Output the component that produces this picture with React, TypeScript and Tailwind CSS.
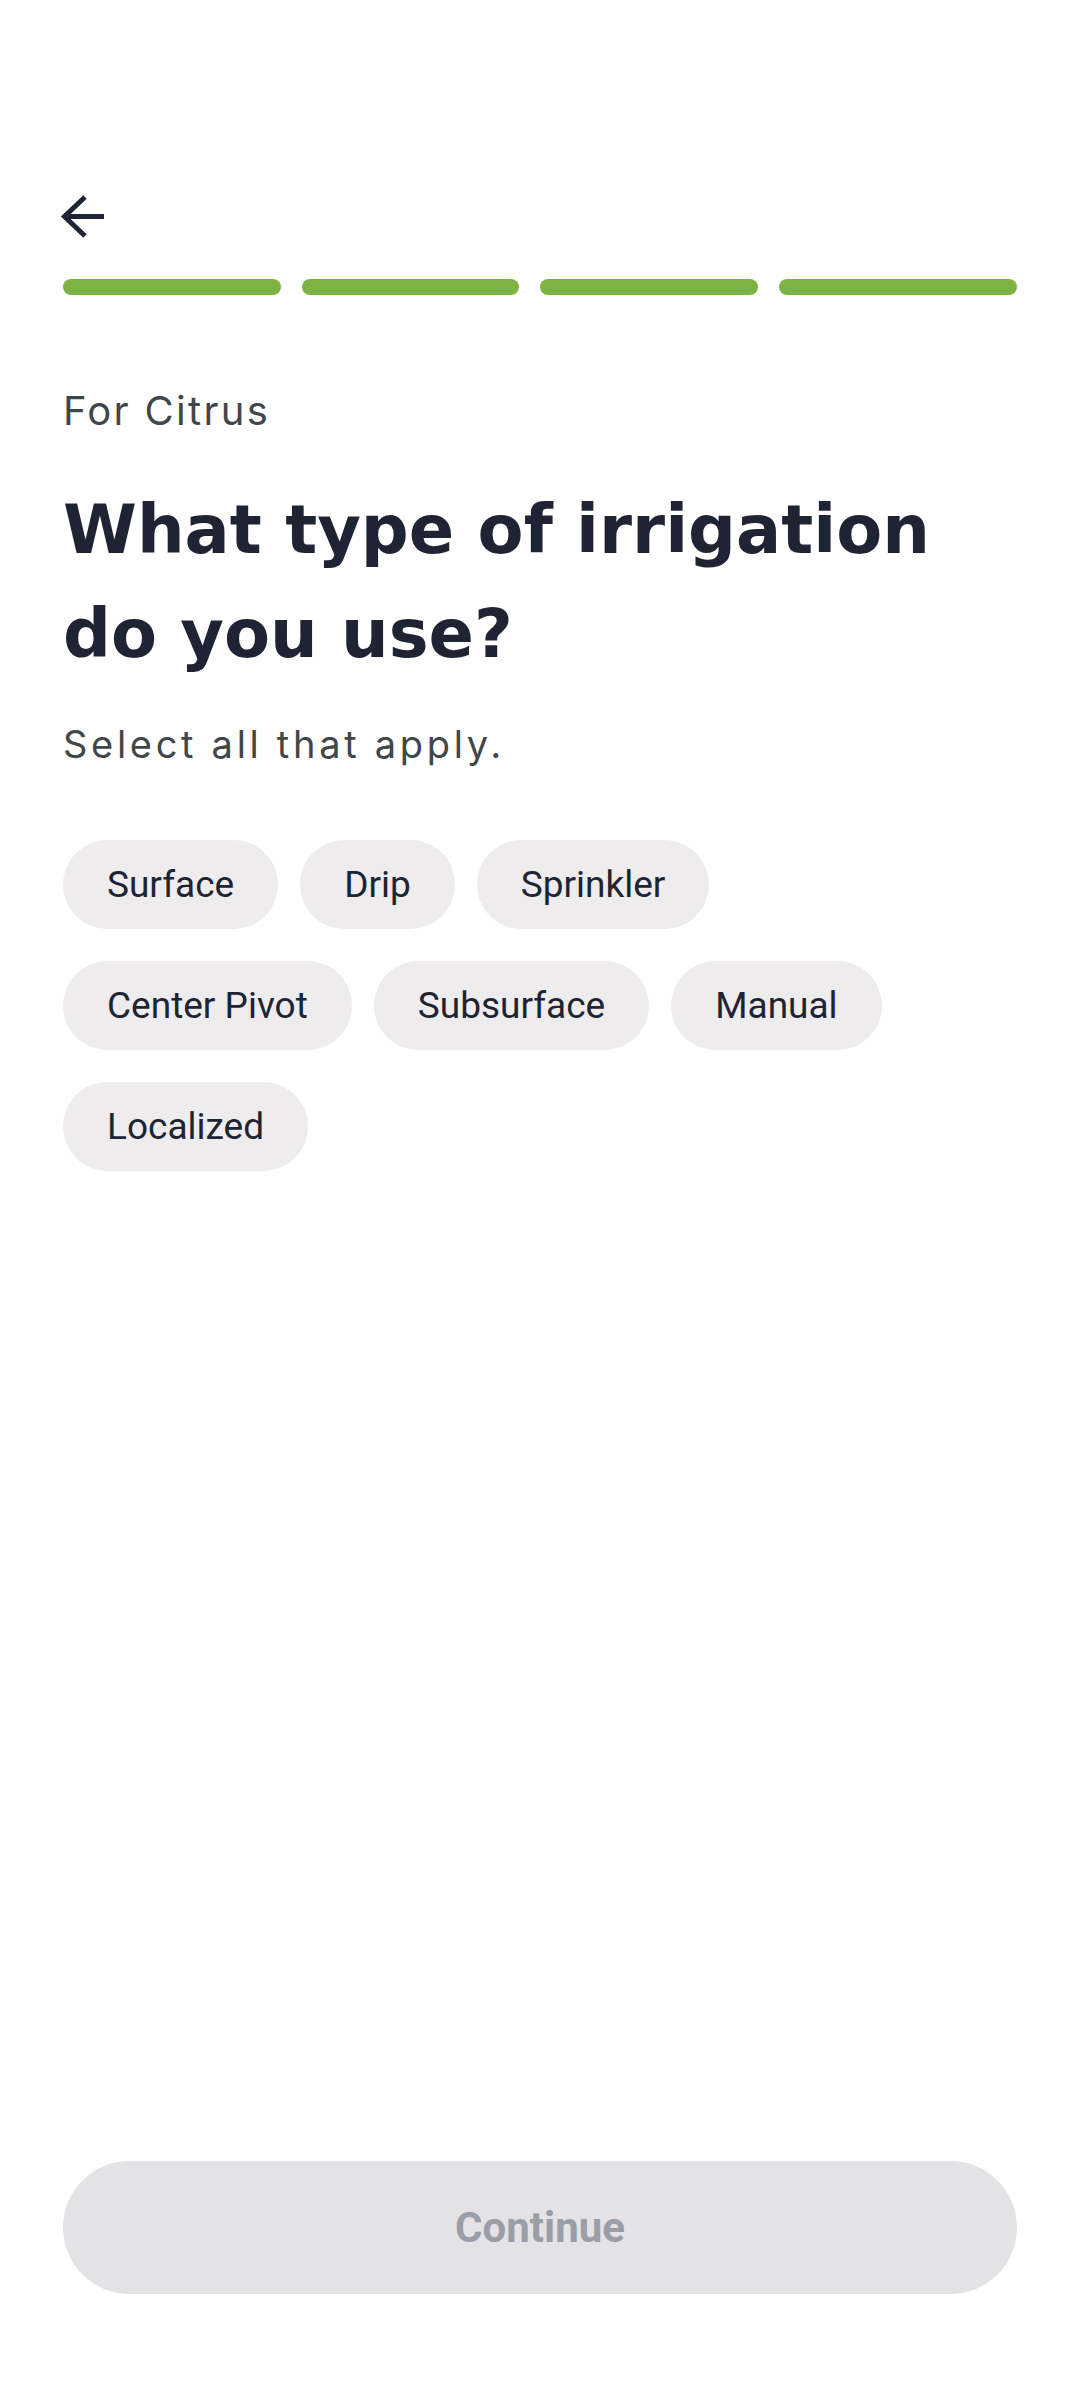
import React from "react";

const chips: string[] = [
  "Surface",
  "Drip",
  "Sprinkler",
  "Center Pivot",
  "Subsurface",
  "Manual",
  "Localized",
];

function Chip({ label }: { label: string }) {
  return (
    <button
      type="button"
      className="h-[89px] px-[44px] rounded-full bg-[#eeeced] text-[#1d2433] text-[37px] leading-[44px] flex items-center font-['Roboto',sans-serif]"
    >
      {label}
    </button>
  );
}

function Bar() {
  return <div className="h-[16px] rounded-full bg-[#7cb342]" />;
}

export default function App() {
  return (
    <div className="w-[1080px] h-[2400px] bg-white flex flex-col px-[63px] font-['Inter',sans-serif]">
      <div className="pt-[192px] -ml-[3px]">
        <svg width="48" height="48" viewBox="0 0 48 48" fill="none">
          <path d="M25 5 L4.5 24.5 L25 44" stroke="#1e2433" strokeWidth="5" strokeLinejoin="miter" />
          <path d="M5 24.5 H44" stroke="#1e2433" strokeWidth="5" />
        </svg>
      </div>

      <div className="mt-[39px] grid grid-cols-4">
        <div className="pr-[21px]">
          <Bar />
        </div>
        <div className="pr-[21px]">
          <Bar />
        </div>
        <div className="pr-[21px]">
          <Bar />
        </div>
        <div>
          <Bar />
        </div>
      </div>

      <p className="mt-[92px] text-[40px] leading-[48px] tracking-[2.3px] text-[#3f474a] font-normal">For Citrus</p>

      <h1 className="mt-[43px] text-[67px] leading-[104px] font-bold text-[#1e2433] font-['DejaVu_Sans',sans-serif]">
        What type of irrigation
        <br />
        do you use?
      </h1>

      <p className="mt-[36px] text-[38px] leading-[44px] tracking-[3.7px] text-[#3f474a] font-normal">
        Select all that apply.
      </p>

      <div className="mt-[74px] flex flex-wrap gap-x-[22px] gap-y-[32px] w-[900px]">
        {chips.map((c) => (
          <Chip key={c} label={c} />
        ))}
      </div>

      <button
        type="button"
        className="mt-auto mb-[106px] h-[133px] w-full rounded-full bg-[#e3e3e6] text-[#9b9ea6] text-[42px] font-bold font-['Roboto',sans-serif]"
      >
        Continue
      </button>
    </div>
  );
}
